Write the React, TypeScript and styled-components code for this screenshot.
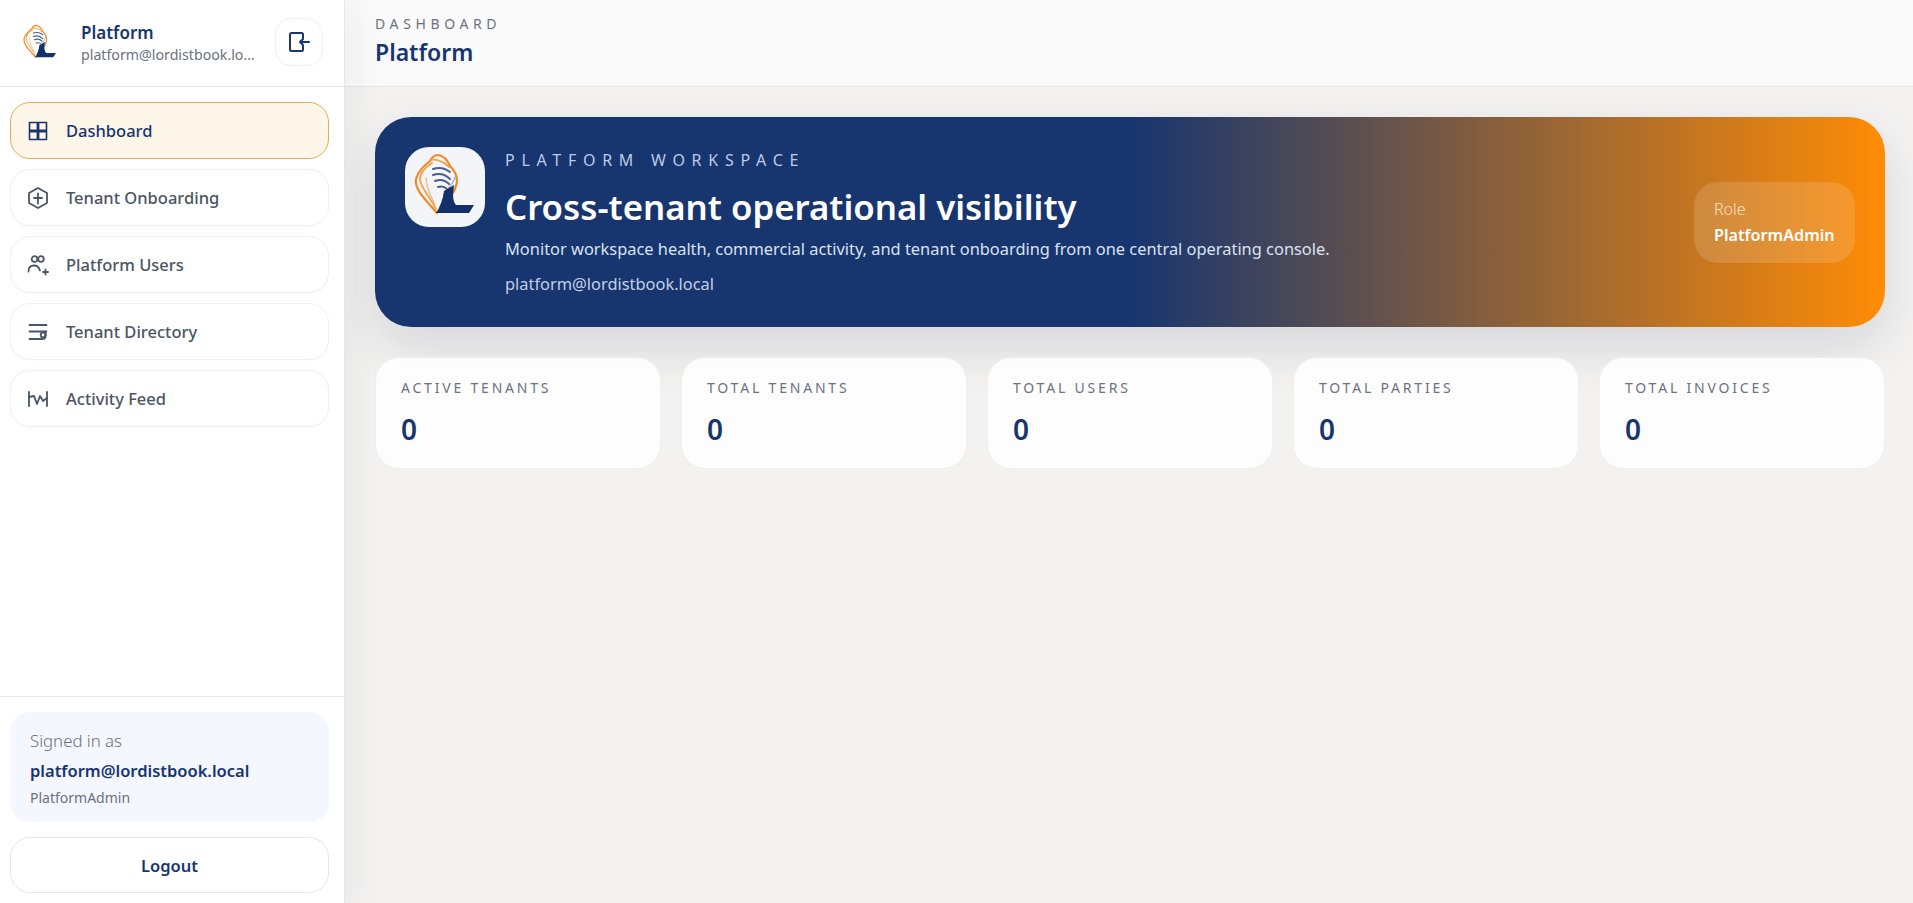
import React from "react";
import styled, { createGlobalStyle } from "styled-components";

const navy = "#17356f";

const GlobalStyle = createGlobalStyle`
	html, body {
		margin: 0;
		padding: 0;
		height: 100%;
		background: #f3f2f1;
	}
	body {
		font-family: "Noto Sans", "Open Sans", "Liberation Sans", sans-serif;
	}
	* {
		box-sizing: border-box;
	}
`;

const Layout = styled.div`
	display: flex;
	height: 100vh;
	overflow: hidden;
`;

const Sidebar = styled.aside`
	position: relative;
	z-index: 2;
	flex: 0 0 345px;
	width: 345px;
	min-width: 0;
	display: flex;
	flex-direction: column;
	background: #fff;
	border-right: 1px solid #e6e6e8;
	box-shadow: 10px 0 30px rgba(20, 30, 50, 0.05);
`;

const SidebarHeader = styled.div`
	height: 87px;
	flex: none;
	min-width: 0;
	display: flex;
	align-items: center;
	padding: 0 21px 0 16px;
	border-bottom: 1px solid #e6e6e8;
`;

const BrandMark = styled.div`
	width: 48px;
	height: 48px;
	flex: none;
	display: flex;
	align-items: center;
	justify-content: center;
`;

const BrandText = styled.div`
	flex: 1;
	min-width: 0;
	margin-left: 17px;
	margin-right: 20px;
`;

const BrandName = styled.div`
	font-size: 17px;
	line-height: 23px;
	font-weight: 600;
	color: ${navy};
`;

const BrandMail = styled.div`
	font-size: 14.2px;
	line-height: 21px;
	color: #6b7280;
	white-space: nowrap;
	overflow: hidden;
	text-overflow: ellipsis;
`;

const CollapseButton = styled.button`
	width: 48px;
	height: 48px;
	flex: none;
	margin-bottom: 2px;
	display: flex;
	align-items: center;
	justify-content: center;
	background: #fff;
	border: 1px solid #f0f0f2;
	border-radius: 16px;
	padding: 0;
`;

const Nav = styled.nav`
	flex: 1;
	display: flex;
	flex-direction: column;
	gap: 10px;
	padding: 15px 15px 0 10px;
`;

const NavItem = styled.a<{ $active?: boolean }>`
	height: 57px;
	display: flex;
	align-items: center;
	gap: 17px;
	padding: 0 16px;
	border-radius: 20px;
	font-size: 16.5px;
	font-weight: 500;
	color: ${({ $active }) => ($active ? navy : "#4b5563")};
	background: ${({ $active }) => ($active ? "#fff6ea" : "#fff")};
	border: 1px solid ${({ $active }) => ($active ? "#e6ac55" : "#f0f0f2")};
	box-shadow: 0 1px 2px rgba(20, 30, 50, 0.02);
`;

const SidebarFooter = styled.div`
	flex: none;
	display: flex;
	flex-direction: column;
	gap: 15px;
	padding: 15px 15px 10px 10px;
	border-top: 1px solid #e6e6e8;
`;

const SessionCard = styled.div`
	height: 110px;
	padding: 17px 20px 0;
	background: #f4f7fd;
	border-radius: 20px;
`;

const SessionLabel = styled.div`
	font-size: 16.8px;
	line-height: 24px;
	color: #6b7280;
	font-weight: 300;
`;

const SessionMail = styled.div`
	margin-top: 6px;
	font-size: 16.5px;
	line-height: 24px;
	font-weight: 600;
	color: ${navy};
`;

const SessionRole = styled.div`
	margin-top: 5px;
	font-size: 14px;
	line-height: 20px;
	color: #6b7280;
`;

const LogoutButton = styled.button`
	height: 56px;
	background: #fff;
	border: 1px solid #e6e6e8;
	border-radius: 20px;
	font: inherit;
	font-size: 16.5px;
	font-weight: 600;
	color: ${navy};
`;

const Main = styled.main`
	flex: 1;
	min-width: 0;
	display: flex;
	flex-direction: column;
	background: #f3f2f1;
`;

const TopBar = styled.header`
	height: 87px;
	flex: none;
	padding: 14px 30px 0;
	background: #fafafb;
	border-bottom: 1px solid #e6e6e8;
`;

const Crumb = styled.div`
	font-size: 14px;
	line-height: 20px;
	letter-spacing: 0.33em;
	color: #6b7280;
`;

const PageTitle = styled.h1`
	margin: 2px 0 0;
	font-size: 23px;
	line-height: 32px;
	font-weight: 600;
	color: ${navy};
`;

const Content = styled.div`
	display: flex;
	flex-direction: column;
	gap: 30px;
	padding: 30px 28px 0 30px;
`;

const Hero = styled.section`
	height: 210px;
	display: flex;
	align-items: center;
	gap: 20px;
	padding: 0 30px;
	border-radius: 36px;
	background: linear-gradient(90deg, ${navy} 0%, ${navy} 50%, #ff8c06 100%);
	box-shadow: 0 20px 50px rgba(20, 30, 60, 0.13);
`;

const HeroLogo = styled.div`
	width: 80px;
	height: 80px;
	flex: none;
	align-self: flex-start;
	margin-top: 30px;
	background: #f4f5f8;
	border-radius: 24px;
`;

const HeroText = styled.div`
	flex: 1;
	min-width: 0;
`;

const HeroEyebrow = styled.div`
	font-size: 16px;
	line-height: 22px;
	letter-spacing: 0.42em;
	color: #bccbe6;
`;

const HeroTitle = styled.h2`
	margin: 13px 0 0;
	font-size: 34.8px;
	line-height: 46px;
	font-weight: 600;
	color: #fff;
`;

const HeroLine = styled.p<{ $muted?: boolean }>`
	margin: ${({ $muted }) => ($muted ? "11px" : "7px")} 0 0;
	font-size: 16.4px;
	line-height: 24px;
	color: ${({ $muted }) => ($muted ? "#c3cfe8" : "#d9e2f2")};
`;

const RoleBadge = styled.div`
	width: 161px;
	height: 81px;
	flex: none;
	padding: 15px 20px 0;
	border-radius: 24px;
	background: rgba(255, 255, 255, 0.14);
`;

const RoleLabel = styled.div`
	font-size: 16px;
	line-height: 24px;
	font-weight: 300;
	color: #f8e0c2;
`;

const RoleValue = styled.div`
	margin-top: 2px;
	font-size: 16.2px;
	line-height: 24px;
	font-weight: 600;
	color: #fff;
`;

const StatGrid = styled.div`
	display: grid;
	grid-template-columns: repeat(5, 1fr);
	gap: 20px;
`;

const StatCard = styled.div`
	height: 112px;
	padding: 20px 25px 0;
	background: rgba(255, 255, 255, 0.85);
	border: 1px solid #efefef;
	border-radius: 24px;
`;

const StatLabel = styled.div`
	font-size: 14px;
	line-height: 20px;
	letter-spacing: 0.2em;
	color: #6b7280;
`;

const StatValue = styled.div`
	margin-top: 12px;
	font-size: 28px;
	line-height: 38px;
	font-weight: 600;
	color: ${navy};
`;

const Logo: React.FC<{ size: number }> = ({ size }) => (
	<svg width={size} height={size} viewBox="0 0 80 80" fill="none">
		<path d="M32 66C20 52 9 42 11 32c2-8 8-13 14-18 2-4 5-6 8-6 6 1 10 6 12 11 4 4 7 9 7 15 0 4-2 8-4 12" stroke="#ef8a24" strokeWidth="2.200" strokeLinecap="round" />
		<path d="M31 62C24 48 15 40 15 32c0-7 6-12 12-16M26 13c4-1 13 1 18 7" stroke="#f2a04a" strokeWidth="1.800" strokeLinecap="round" />
		<path d="M30 58C24 46 21 38 21 31" stroke="#e9b98a" strokeWidth="1.400" strokeLinecap="round" />
		<path d="M28 22c6-2 12-1 17 3M28 28c6-2 12-1 17 4M30 34c5-2 10-1 14 3M33 40c3-1 6-1 9 2" stroke="#4a5f8a" strokeWidth="2" strokeLinecap="round" />
		<path d="M50 30c-1 6-8 12-11 18" stroke="#9fb0c8" strokeWidth="1.400" strokeLinecap="round" />
		<path d="M39 44l10-6-1 9c0 5 1 9 3 11h18l-5 8H31c4-6 7-14 8-22z" fill="#12306a" />
	</svg>
);

const IconBase: React.FC<{ color: string; size?: number; children: React.ReactNode }> = ({ color, size = 22, children }) => (
	<svg width={size} height={size} viewBox="0 0 22 22" fill="none" stroke={color} strokeWidth="1.800" strokeLinecap="round" strokeLinejoin="round" style={{ flex: "none" }}>
		{children}
	</svg>
);

const GridIcon = () => (
	<IconBase color={navy}>
		<rect x="2.500" y="2.500" width="7.900" height="7.900" strokeWidth="1.600" />
		<rect x="11.600" y="2.500" width="7.900" height="7.900" strokeWidth="1.600" />
		<rect x="2.500" y="11.600" width="7.900" height="7.900" strokeWidth="1.600" />
		<rect x="11.600" y="11.600" width="7.900" height="7.900" strokeWidth="1.600" />
	</IconBase>
);

const HexPlusIcon = () => (
	<IconBase color="#4b5563">
		<path d="M11 1l9 5v10l-9 5-9-5V6z" />
		<path d="M11 6.500v10M7 11h8" />
	</IconBase>
);

const UsersIcon = () => (
	<IconBase color="#4b5563">
		<circle cx="7.500" cy="5" r="2.800" />
		<circle cx="14" cy="5" r="2.800" />
		<path d="M1.500 17.500c0-4 2.500-6 5.500-6s5 1.500 6 5" />
		<path d="M18.500 15.500v5M16 18h5" />
	</IconBase>
);

const DirectoryIcon = () => (
	<IconBase color="#4b5563">
		<path d="M2.500 4h17M2.500 10.500h17M2.500 18h13" />
		<circle cx="16" cy="14" r="2.300" />
		<path d="M17.500 10.500c2 1 2 6-.5 7.500" />
	</IconBase>
);

const WaveIcon = () => (
	<IconBase color="#4b5563">
		<path d="M2 4v14M20 4v14" />
		<path d="M2 9l5-1 3 8 3-8 3 5 4-3" />
	</IconBase>
);

const ExitIcon = () => (
	<svg width="24" height="24" viewBox="0 0 24 24" fill="none" stroke={navy} strokeWidth="2" strokeLinecap="round" strokeLinejoin="round">
		<path d="M16 8V4.500A1.500 1.500 0 0 0 14.500 3h-10A1.500 1.500 0 0 0 3 4.500v15A1.500 1.500 0 0 0 4.500 21h10a1.500 1.500 0 0 0 1.500-1.500V16" />
		<path d="M22 12H13M16 9l-3 3 3 3" />
	</svg>
);

const navItems = [
	{ label: "Dashboard", icon: <GridIcon />, active: true },
	{ label: "Tenant Onboarding", icon: <HexPlusIcon /> },
	{ label: "Platform Users", icon: <UsersIcon /> },
	{ label: "Tenant Directory", icon: <DirectoryIcon /> },
	{ label: "Activity Feed", icon: <WaveIcon /> },
];

const stats = ["Active Tenants", "Total Tenants", "Total Users", "Total Parties", "Total Invoices"];

const App: React.FC = () => (
	<Layout>
		<GlobalStyle />
		<Sidebar>
			<SidebarHeader>
				<BrandMark>
					<Logo size={44} />
				</BrandMark>
				<BrandText>
					<BrandName>Platform</BrandName>
					<BrandMail>platform@lordistbook.local</BrandMail>
				</BrandText>
				<CollapseButton>
					<ExitIcon />
				</CollapseButton>
			</SidebarHeader>
			<Nav>
				{navItems.map((item) => (
					<NavItem key={item.label} $active={item.active}>
						{item.icon}
						{item.label}
					</NavItem>
				))}
			</Nav>
			<SidebarFooter>
				<SessionCard>
					<SessionLabel>Signed in as</SessionLabel>
					<SessionMail>platform@lordistbook.local</SessionMail>
					<SessionRole>PlatformAdmin</SessionRole>
				</SessionCard>
				<LogoutButton>Logout</LogoutButton>
			</SidebarFooter>
		</Sidebar>
		<Main>
			<TopBar>
				<Crumb>DASHBOARD</Crumb>
				<PageTitle>Platform</PageTitle>
			</TopBar>
			<Content>
				<Hero>
					<HeroLogo>
						<Logo size={80} />
					</HeroLogo>
					<HeroText>
						<HeroEyebrow>PLATFORM WORKSPACE</HeroEyebrow>
						<HeroTitle>Cross-tenant operational visibility</HeroTitle>
						<HeroLine>Monitor workspace health, commercial activity, and tenant onboarding from one central operating console.</HeroLine>
						<HeroLine $muted>platform@lordistbook.local</HeroLine>
					</HeroText>
					<RoleBadge>
						<RoleLabel>Role</RoleLabel>
						<RoleValue>PlatformAdmin</RoleValue>
					</RoleBadge>
				</Hero>
				<StatGrid>
					{stats.map((label) => (
						<StatCard key={label}>
							<StatLabel>{label.toUpperCase()}</StatLabel>
							<StatValue>0</StatValue>
						</StatCard>
					))}
				</StatGrid>
			</Content>
		</Main>
	</Layout>
);

export default App;
